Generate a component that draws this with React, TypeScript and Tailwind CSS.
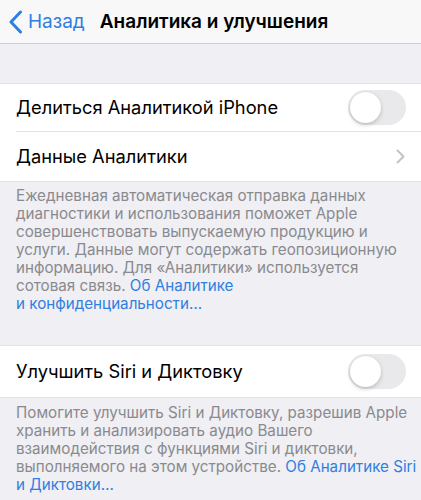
const font = { fontFamily: 'Inter, "Noto Sans", sans-serif' };

const Toggle = () => (
  <div className="w-[58px] h-[35px] rounded-full bg-[#e9e9eb] p-[2px] flex items-center">
    <div className="w-[31px] h-[31px] rounded-full bg-white shadow-[0_2px_4px_rgba(0,0,0,0.18),0_0_0_0.5px_rgba(0,0,0,0.06)]" />
  </div>
);

const Chevron = () => (
  <svg width="9" height="15" viewBox="0 0 9 15" fill="none">
    <path d="M1.5 1.5L7.5 7.5L1.5 13.5" stroke="#c4c4c7" strokeWidth="2" strokeLinecap="round" strokeLinejoin="round" />
  </svg>
);

const Footer = ({ lines }: { lines: React.ReactNode[] }) => (
  <div className="px-[16px] text-[15.2px] text-[#8a8a8e]">
    {lines.map((l, i) => (
      <div key={i} className="h-[18px] leading-[18px] whitespace-nowrap">
        {l}
      </div>
    ))}
  </div>
);

const Link = ({ children }: { children: React.ReactNode }) => <span className="text-[#2f7fe0]">{children}</span>;

export default function App() {
  return (
    <div className="w-[421px] h-[500px] overflow-hidden bg-[#efeff4] text-black antialiased" style={font}>
      <header className="h-[44px] bg-[#f8f8f8] border-b border-[#cfcfd3] flex items-center">
        <div className="flex items-center pl-[9px] text-[#2f7fe0]">
          <svg width="14" height="24" viewBox="0 0 14 24" fill="none">
            <path d="M11.5 2L2 12L11.5 22" stroke="#2f7fe0" strokeWidth="3" strokeLinecap="round" strokeLinejoin="round" />
          </svg>
          <span className="ml-[5px] text-[19px] leading-none">Назад</span>
        </div>
        <h1 className="ml-[15px] text-[19px] font-semibold leading-none">Аналитика и улучшения</h1>
      </header>

      <div className="h-[39px]" />

      <section className="bg-white border-y border-[#e3e3e6]">
        <div className="h-[48px] pl-[16px] flex items-center">
          <div className="flex-1 h-full flex items-center justify-between pr-[15px] border-b border-[#e3e3e6]">
            <span className="text-[18.3px]">Делиться Аналитикой iPhone</span>
            <Toggle />
          </div>
        </div>
        <div className="h-[49px] pl-[16px] pr-[16px] flex items-center justify-between">
          <span className="text-[18.3px]">Данные Аналитики</span>
          <Chevron />
        </div>
      </section>

      <div className="h-[5px]" />
      <Footer
        lines={[
          'Ежедневная автоматическая отправка данных',
          'диагностики и использования поможет Apple',
          'совершенствовать выпускаемую продукцию и',
          'услуги. Данные могут содержать геопозиционную',
          'информацию. Для «Аналитики» используется',
          <>
            сотовая связь. <Link>Об Аналитике</Link>
          </>,
          <Link>и конфиденциальности…</Link>,
        ]}
      />

      <div className="h-[32px]" />

      <section className="bg-white border-y border-[#e3e3e6]">
        <div className="h-[51px] pl-[16px] pr-[15px] flex items-center justify-between">
          <span className="text-[18.3px]">Улучшить Siri и Диктовку</span>
          <Toggle />
        </div>
      </section>

      <div className="h-[6px]" />
      <Footer
        lines={[
          'Помогите улучшить Siri и Диктовку, разрешив Apple',
          'хранить и анализировать аудио Вашего',
          'взаимодействия с функциями Siri и диктовки,',
          <>
            выполняемого на этом устройстве. <Link>Об Аналитике Siri</Link>
          </>,
          <Link>и Диктовки…</Link>,
        ]}
      />
    </div>
  );
}
